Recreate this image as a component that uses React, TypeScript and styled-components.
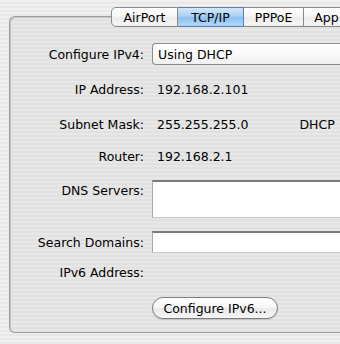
import React from "react";
import styled, { createGlobalStyle } from "styled-components";

const Global = createGlobalStyle`
  html, body { margin: 0; padding: 0; }
  body {
    width: 340px; height: 344px; overflow: hidden;
    font-family: "DejaVu Sans", "Liberation Sans", sans-serif;
    font-size: 12.5px; color: #000;
    background: repeating-linear-gradient(to bottom, #efefef 0 2px, #e8e8e8 2px 4px);
  }
`;

const Page = styled.div`
  padding: 7px 0 0 9px;
  width: 340px; height: 344px; box-sizing: border-box;
  overflow: hidden;
`;

const TabRow = styled.div`
  display: flex;
  margin-left: 102px;
  height: 20px;
  margin-bottom: -11px;
  position: relative;
  z-index: 1;
`;

const Tab = styled.div<{ $active?: boolean; $first?: boolean; $w: number }>`
  width: ${(p) => p.$w}px;
  flex: none;
  height: 20px; box-sizing: border-box;
  display: flex; align-items: center; justify-content: center;
  border: 1px solid #8a8a8a;
  border-left: ${(p) => (p.$first ? "1px solid #8a8a8a" : "none")};
  border-radius: ${(p) => (p.$first ? "5px 0 0 5px" : "0")};
  background: ${(p) =>
    p.$active
      ? "linear-gradient(to bottom, #d2e7fb 0%, #a9d0f4 45%, #8cc0f0 55%, #b6dafa 100%)"
      : "linear-gradient(to bottom, #ffffff 0%, #f6f6f6 45%, #ebebeb 55%, #f8f8f8 100%)"};
  border-color: ${(p) => (p.$active ? "#5c7fb0" : "#8a8a8a")};
  white-space: nowrap;
  overflow: hidden;
  box-shadow: inset 0 -1px 0 rgba(0,0,0,0.05);
`;

const Panel = styled.div`
  width: 360px;
  height: 317px;
  box-sizing: border-box;
  border: 1px solid #9c9c9c;
  border-right: none;
  border-radius: 6px 0 0 6px;
  background: repeating-linear-gradient(to bottom, #e7e7e7 0 2px, #e1e1e1 2px 4px);
  box-shadow: inset 1px 1px 0 #c6c6c6;
  padding-top: 26px;
  display: flex; flex-direction: column;
`;

const Row = styled.div<{ $h?: number; $mt?: number; $top?: boolean }>`
  display: grid;
  grid-template-columns: 134px 1fr;
  column-gap: 8px;
  height: ${(p) => p.$h ?? 22}px;
  margin-top: ${(p) => p.$mt ?? 0}px;
  align-items: ${(p) => (p.$top ? "start" : "center")};
`;

const Label = styled.div<{ $pt?: number }>`
  text-align: right;
  white-space: nowrap;
  padding-top: ${(p) => p.$pt ?? 0}px;
`;

const Value = styled.div`
  display: flex; align-items: center;
  padding-left: 5px;
  white-space: nowrap;
`;

const Extra = styled.span`
  margin-left: 51px;
`;

const Popup = styled.div`
  height: 22px; box-sizing: border-box;
  border: 1px solid #8c8c8c;
  border-right: none;
  border-radius: 4px 0 0 4px;
  background: linear-gradient(to bottom, #ffffff 0%, #fafafa 50%, #f0f0f0 100%);
  display: flex; align-items: center;
  padding-left: 5px;
`;

const TextBox = styled.div<{ $h: number }>`
  height: ${(p) => p.$h}px; box-sizing: border-box;
  background: #fff;
  border-top: 2px solid #7a7a7a;
  border-left: 1px solid #a8a8a8;
  border-bottom: 1px solid #c8c8c8;
`;

const Button = styled.div`
  width: 126px; height: 22px; box-sizing: border-box;
  border: 1px solid #7d7d7d;
  border-radius: 11px;
  background: linear-gradient(to bottom, #ffffff 0%, #f7f7f7 45%, #e9e9e9 55%, #f6f6f6 100%);
  display: flex; align-items: center; justify-content: center;
  box-shadow: 0 1px 1px rgba(0,0,0,0.15);
  white-space: nowrap;
`;

export default function App() {
  return (
    <>
      <Global />
      <Page>
        <TabRow>
          <Tab $first $w={67}>AirPort</Tab>
          <Tab $active $w={66}>TCP/IP</Tab>
          <Tab $w={60}>PPPoE</Tab>
          <Tab $w={38}>&nbsp;&nbsp;App</Tab>
        </TabRow>
        <Panel>
          <Row>
            <Label>Configure IPv4:</Label>
            <Popup>Using DHCP</Popup>
          </Row>
          <Row $mt={13}>
            <Label>IP Address:</Label>
            <Value>192.168.2.101</Value>
          </Row>
          <Row $mt={13}>
            <Label>Subnet Mask:</Label>
            <Value>
              255.255.255.0<Extra>DHCP</Extra>
            </Value>
          </Row>
          <Row $mt={10}>
            <Label>Router:</Label>
            <Value>192.168.2.1</Value>
          </Row>
          <Row $mt={13} $h={38} $top>
            <Label $pt={3}>DNS Servers:</Label>
            <TextBox $h={38} />
          </Row>
          <Row $mt={13}>
            <Label>Search Domains:</Label>
            <TextBox $h={22} />
          </Row>
          <Row $mt={8}>
            <Label>IPv6 Address:</Label>
            <Value />
          </Row>
          <Row $mt={14}>
            <div />
            <Button>Configure IPv6...</Button>
          </Row>
        </Panel>
      </Page>
    </>
  );
}
